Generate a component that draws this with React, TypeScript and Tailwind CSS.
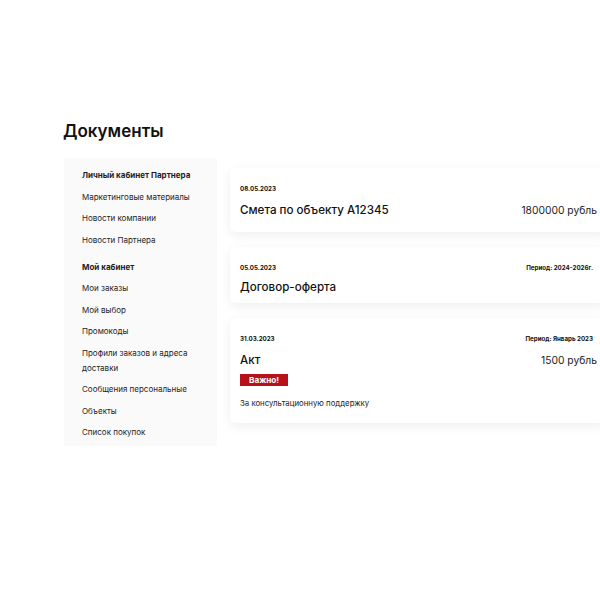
import React from 'react';

const font = { fontFamily: 'Inter, "Noto Sans", sans-serif' };

const partnerLinks = ['Маркетинговые материалы', 'Новости компании', 'Новости Партнера'];
const myLinks = [
  'Мои заказы',
  'Мой выбор',
  'Промокоды',
  'Профили заказов и адреса доставки',
  'Сообщения персональные',
  'Объекты',
  'Список покупок',
];

const Sidebar = () => (
  <aside className="ml-[1px] w-[153px] shrink-0 self-start bg-[#fafafa] pt-[7px] pb-[2px] pl-[18px] pr-[10px] text-[8px] text-[#1d1d1f]">
    <div className="py-[3.25px] leading-[15px] font-bold">Личный кабинет Партнера</div>
    {partnerLinks.map((l) => (
      <div key={l} className="py-[3.25px] leading-[15px]">{l}</div>
    ))}
    <div className="mt-[5.5px] py-[3.25px] leading-[15px] font-bold">Мой кабинет</div>
    {myLinks.map((l) => (
      <div key={l} className="py-[3.25px] leading-[15px]">{l}</div>
    ))}
  </aside>
);

type Doc = {
  date: string;
  title: string;
  period?: string;
  price?: string;
  important?: boolean;
  note?: string;
};

const docs: Doc[] = [
  { date: '08.05.2023', title: 'Смета по объекту А12345', price: '1800000 рубль' },
  { date: '05.05.2023', title: 'Договор-оферта', period: 'Период: 2024-2026г.' },
  {
    date: '31.03.2023',
    title: 'Акт',
    period: 'Период: Январь 2023',
    price: '1500 рубль',
    important: true,
    note: 'За консультационную поддержку',
  },
];

const DocCard = ({ doc }: { doc: Doc }) => (
  <div
    className={
      doc.price
        ? 'rounded-[6px] bg-white px-[10px] pt-[17px] pb-[9px] shadow-[0_3px_12px_rgba(0,0,0,0.07)]'
        : 'rounded-[6px] bg-white px-[10px] pt-[17px] pb-[5px] shadow-[0_3px_12px_rgba(0,0,0,0.07)]'
    }
  >
    <div className="flex h-[8px] items-center justify-between text-[6.2px] font-bold text-[#111]">
      <span>{doc.date}</span>
      {doc.period && <span className="mr-[4px]">{doc.period}</span>}
    </div>
    <div className="mt-[4px] flex items-center justify-between">
      <span className="text-[11.6px] font-medium leading-[22px] text-[#111]">{doc.title}</span>
      {doc.price && <span className="text-[10.3px] leading-[26px] text-[#222]">{doc.price}</span>}
    </div>
    {doc.important && (
      <div className="mt-[1px] flex h-[12px] w-fit items-center bg-[#b5121b] px-[9px] text-[8.2px] font-bold text-white">
        Важно!
      </div>
    )}
    {doc.note && <div className="mt-[11px] mb-[5px] text-[7.8px] leading-[12px] text-[#222]">{doc.note}</div>}
  </div>
);

const App = () => {
  return (
    <div className="h-[601px] w-[600px] overflow-hidden bg-white" style={font}>
      <div className="pl-[63px] pt-[119px]">
        <h1 className="text-[17px] font-semibold leading-[24px] text-[#111]">Документы</h1>
        <div className="mt-[15px] flex items-start gap-[13px]">
          <Sidebar />
          <div className="mt-[10px] flex w-[377px] shrink-0 flex-col gap-[15px]">
            {docs.map((d) => (
              <DocCard key={d.date} doc={d} />
            ))}
          </div>
        </div>
      </div>
    </div>
  );
};

export default App;
